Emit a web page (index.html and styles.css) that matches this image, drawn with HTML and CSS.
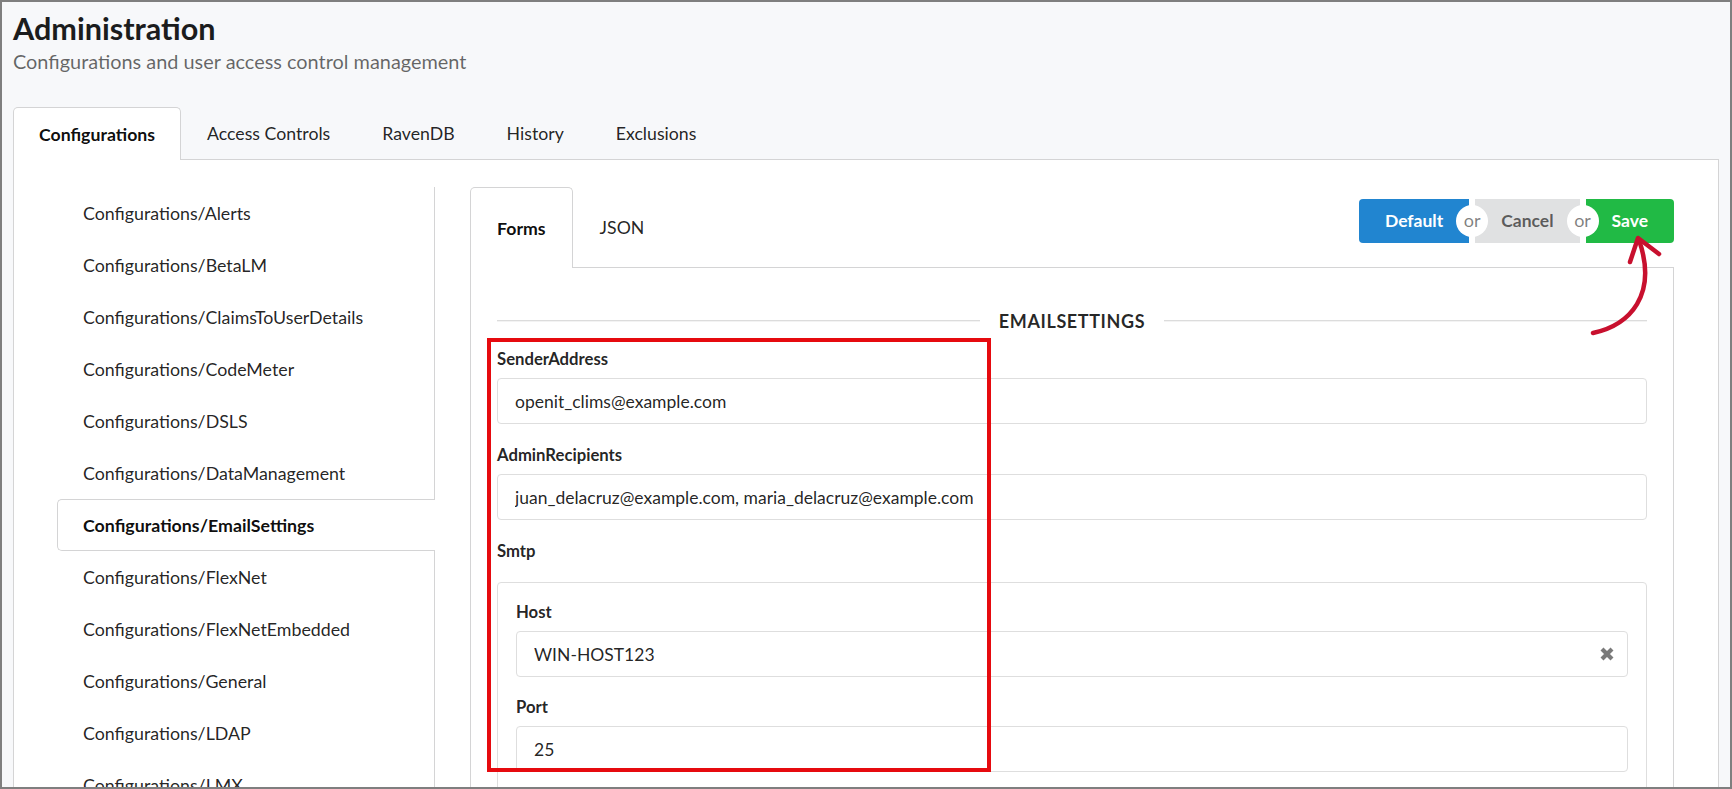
FILE: index.html
```html
<!DOCTYPE html>
<html lang="en">
<head>
    <meta charset="utf-8">
    <title>Administration</title>
    <link rel="stylesheet" href="styles.css">
</head>
<body>
    <div class="frame">
        <div class="page-header">
            <h1 class="title">Administration</h1>
            <div class="subtitle">Configurations and user access control management</div>
        </div>

        <div class="main-tabs">
            <a class="tab active">Configurations</a>
            <a class="tab">Access Controls</a>
            <a class="tab">RavenDB</a>
            <a class="tab">History</a>
            <a class="tab">Exclusions</a>
        </div>

        <div class="main-panel">
            <div class="side-menu">
                <a class="item">Configurations/Alerts</a>
                <a class="item">Configurations/BetaLM</a>
                <a class="item">Configurations/ClaimsToUserDetails</a>
                <a class="item">Configurations/CodeMeter</a>
                <a class="item">Configurations/DSLS</a>
                <a class="item">Configurations/DataManagement</a>
                <a class="item active">Configurations/EmailSettings</a>
                <a class="item">Configurations/FlexNet</a>
                <a class="item">Configurations/FlexNetEmbedded</a>
                <a class="item">Configurations/General</a>
                <a class="item">Configurations/LDAP</a>
                <a class="item">Configurations/LMX</a>
            </div>

            <div class="editor">
                <div class="editor-tabs">
                    <a class="tab active">Forms</a>
                    <a class="tab">JSON</a>
                    <div class="actions">
                        <button class="btn btn-default">Default</button>
                        <span class="or"></span>
                        <button class="btn btn-cancel">Cancel</button>
                        <span class="or"></span>
                        <button class="btn btn-save">Save</button>
                    </div>
                </div>

                <div class="editor-body">
                    <div class="divider"><span>EmailSettings</span></div>

                    <div class="field">
                        <label>SenderAddress</label>
                        <input type="text" value="openit_clims@example.com">
                    </div>

                    <div class="field">
                        <label>AdminRecipients</label>
                        <input type="text" value="juan_delacruz@example.com, maria_delacruz@example.com">
                    </div>

                    <div class="field">
                        <label class="group-label">Smtp</label>
                        <div class="group">
                            <div class="field">
                                <label>Host</label>
                                <div class="input-wrap">
                                    <input type="text" value="WIN-HOST123">
                                    <svg class="clear-icon" viewBox="0 0 16 16" width="16" height="16">
                                        <path d="M3 3 L13 13 M13 3 L3 13" stroke="#7a7a7a" stroke-width="4.2" fill="none"/>
                                    </svg>
                                </div>
                            </div>
                            <div class="field">
                                <label>Port</label>
                                <input type="text" value="25">
                            </div>
                        </div>
                    </div>
                </div>
            </div>
        </div>
    </div>

    <!-- annotations drawn over the screenshot -->
    <div class="highlight"></div>
    <svg class="arrow" viewBox="0 0 90 120" width="90" height="120">
        <path d="M13 108 C50 100, 78 70, 59 15" stroke="#c8102e" stroke-width="4.5" fill="none" stroke-linecap="round"/>
        <path d="M50 37 L58 13 L79 29" stroke="#c8102e" stroke-width="4.5" fill="none" stroke-linecap="round" stroke-linejoin="round"/>
    </svg>
</body>
</html>
```

FILE: styles.css
```css
body {
    margin: 0;
    font-family: Lato, "Noto Sans", sans-serif;
    color: rgba(0, 0, 0, 0.87);
    background: #fff;
}
.frame {
    width: 1732px;
    height: 789px;
    box-sizing: border-box;
    border: 2px solid #7f7f7f;
    background: #f7f8fa;
    overflow: hidden;
}

/* header */
.page-header {
    padding: 7px 0 0 11px;
}
.title {
    margin: 0;
    font-size: 30.6px;
    font-weight: 700;
    line-height: 40px;
    color: #1b1c1d;
}
.subtitle {
    font-size: 19.9px;
    line-height: 24px;
    color: rgba(0, 0, 0, 0.6);
}

/* top tabs */
.main-tabs {
    display: flex;
    margin: 34px 11px 0 11px;
    border-bottom: 1px solid #d4d4d5;
    height: 52px;
}
.tab {
    display: flex;
    align-items: center;
    box-sizing: border-box;
    padding: 0 25px;
    font-size: 17.7px;
    border: 1px solid transparent;
    border-bottom: none;
    cursor: pointer;
}
.tab.active {
    background: #fff;
    border-color: #d4d4d5;
    border-radius: 5px 5px 0 0;
    font-weight: 700;
    color: rgba(0, 0, 0, 0.95);
    margin-bottom: -1px;
}

/* main panel */
.main-panel {
    display: flex;
    margin: 0 11px;
    background: #fff;
    border: 1px solid #d4d4d5;
    border-top: none;
    padding: 27px 44px 0 43px;
    height: 700px;
}
.side-menu {
    width: 378px;
    flex-shrink: 0;
    box-sizing: border-box;
    border-right: 1px solid #d4d4d5;
}
.side-menu .item {
    display: flex;
    align-items: center;
    box-sizing: border-box;
    height: 52px;
    padding: 0 25px;
    font-size: 17.8px;
    border: 1px solid transparent;
    border-right: none;
}
.side-menu .item.active {
    background: #fff;
    border-color: #d4d4d5;
    border-radius: 5px 0 0 5px;
    margin-right: -1px;
    font-weight: 700;
    color: rgba(0, 0, 0, 0.95);
}

/* editor */
.editor {
    flex: 1;
    margin-left: 35px;
    min-width: 0;
}
.editor-tabs {
    display: flex;
    height: 80px;
    border-bottom: 1px solid #d4d4d5;
}
.editor-tabs .tab {
    padding: 0 26px;
}
.editor-tabs .tab.active {
    height: 81px;
}
.actions {
    display: flex;
    margin-left: auto;
    margin-top: 12px;
    align-self: flex-start;
}
.btn {
    font-family: Lato, sans-serif;
    font-size: 17.5px;
    font-weight: 700;
    line-height: 18px;
    padding: 13px 26px;
    border: none;
    cursor: pointer;
}
.btn-default {
    background: #2185d0;
    color: #fff;
    border-radius: 4px 0 0 4px;
}
.btn-cancel {
    background: #e0e1e2;
    color: rgba(0, 0, 0, 0.6);
}
.btn-save {
    background: #21ba45;
    color: #fff;
    border-radius: 0 4px 4px 0;
}
.or {
    position: relative;
    width: 6px;
    z-index: 2;
}
.or::before {
    content: "or";
    position: absolute;
    top: 50%;
    left: 50%;
    width: 32px;
    height: 32px;
    margin: -16px 0 0 -16px;
    border-radius: 50%;
    background: #fff;
    color: rgba(0, 0, 0, 0.5);
    font-size: 18px;
    line-height: 30px;
    text-align: center;
}

.editor-body {
    border: 1px solid #d4d4d5;
    border-top: none;
    padding: 44px 26px 0;
    height: 600px;
}
.divider {
    display: flex;
    align-items: center;
    font-size: 18px;
    font-weight: 700;
    line-height: 18px;
    text-transform: uppercase;
    letter-spacing: 0.6px;
    color: rgba(0, 0, 0, 0.85);
}
.divider::before, .divider::after {
    content: "";
    flex: 1;
    border-top: 1px solid #dcdcdc;
    border-bottom: 1px solid #f3f3f3;
}
.divider span {
    padding: 0 19px;
}

.field {
    margin-top: 19px;
}
.field + .field {
    margin-top: 21px;
}
.field label {
    display: block;
    font-size: 16.7px;
    font-weight: 700;
    line-height: 20px;
    margin-bottom: 9px;
}
.field label.group-label {
    margin-bottom: 21px;
}
.field input {
    display: block;
    width: 100%;
    box-sizing: border-box;
    height: 46px;
    padding: 0 17px;
    font-family: Lato, sans-serif;
    font-size: 17.5px;
    color: rgba(0, 0, 0, 0.87);
    border: 1px solid #dedede;
    border-radius: 4px;
    background: #fff;
    outline: none;
}
.group {
    border: 1px solid #dedede;
    border-radius: 4px;
    padding: 19px 18px;
}
.group .field:first-child {
    margin-top: 0;
}
.group .field + .field {
    margin-top: 20px;
}
.input-wrap {
    position: relative;
}
.clear-icon {
    position: absolute;
    right: 13px;
    top: 15px;
}

/* annotations */
.highlight {
    position: absolute;
    left: 487px;
    top: 338px;
    width: 504px;
    height: 434px;
    box-sizing: border-box;
    border: 4px solid #e60a0f;
}
.arrow {
    position: absolute;
    left: 1580px;
    top: 225px;
}
```
